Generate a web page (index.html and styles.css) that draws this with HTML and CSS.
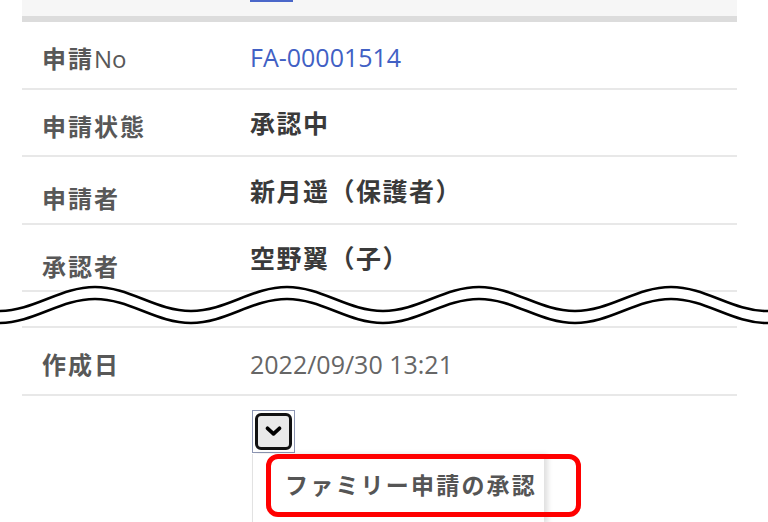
FILE: index.html
```html
<!DOCTYPE html>
<html lang="ja">
<head>
    <meta charset="UTF-8">
    <meta name="viewport" content="width=device-width, initial-scale=1.0">
    <title>ファミリー申請詳細</title>
    <link rel="stylesheet" href="styles.css">
</head>
<body>
    <div class="page">
        <div class="tabs">
            <span class="tab-line"></span>
        </div>

        <div class="detail">
            <div class="row">
                <div class="label">申請<span class="latin">No</span></div>
                <div class="value link">FA-00001514</div>
            </div>
            <div class="row">
                <div class="label">申請状態</div>
                <div class="value strong">承認中</div>
            </div>
            <div class="row">
                <div class="label low">申請者</div>
                <div class="value strong">新月遥（保護者）</div>
            </div>
            <div class="row">
                <div class="label low">承認者</div>
                <div class="value strong">空野翼（子）</div>
            </div>

            <!-- 省略部分 -->
            <div class="break">
                <svg class="wave" viewBox="0 0 768 50" width="768" height="50">
                    <path d="M-97,13 C-62,13 -36,37 -1,37 C34,37 60,13 95,13 C130,13 156,37 191,37 C226,37 252,13 287,13 C322,13 348,37 383,37 C418,37 444,13 479,13 C514,13 540,37 575,37 C610,37 636,13 671,13 C706,13 732,37 767,37 C802,37 828,13 863,13" fill="none" stroke="#fff" stroke-width="12"/>
                    <path d="M-97,7 C-62,7 -36,31 -1,31 C34,31 60,7 95,7 C130,7 156,31 191,31 C226,31 252,7 287,7 C322,7 348,31 383,31 C418,31 444,7 479,7 C514,7 540,31 575,31 C610,31 636,7 671,7 C706,7 732,31 767,31 C802,31 828,7 863,7" fill="none" stroke="#000" stroke-width="2.6"/>
                    <path d="M-97,19 C-62,19 -36,43 -1,43 C34,43 60,19 95,19 C130,19 156,43 191,43 C226,43 252,19 287,19 C322,19 348,43 383,43 C418,43 444,19 479,19 C514,19 540,43 575,43 C610,43 636,19 671,19 C706,19 732,43 767,43 C802,43 828,19 863,19" fill="none" stroke="#000" stroke-width="2.6"/>
                </svg>
            </div>

            <div class="row">
                <div class="label">作成日</div>
                <div class="value date">2022/09/30 13:21</div>
            </div>
        </div>

        <div class="actions">
            <div class="select-btn">
                <span class="select-inner">
                    <svg viewBox="0 0 18 12" width="17" height="11">
                        <path d="M2.5,2.5 L9,8.5 L15.5,2.5" fill="none" stroke="#000" stroke-width="4" stroke-linecap="round" stroke-linejoin="round"/>
                    </svg>
                </span>
            </div>
            <div class="menu">
                <div class="menu-item">ファミリー申請の承認</div>
                <div class="highlight"></div>
            </div>
        </div>
    </div>
</body>
</html>
```

FILE: styles.css
```css
html, body {
    margin: 0;
    height: 522px;
    overflow: hidden;
    background-color: #ffffff;
}
body {
    font-family: 'Open Sans', 'Noto Sans CJK JP', sans-serif;
    color: #333;
}
.page {
    width: 715px;
    margin-left: 22px;
}
.tabs {
    height: 16px;
    background-color: #f6f6f6;
    border-bottom: 6px solid #dcdcdc;
}
.tab-line {
    display: block;
    width: 43px;
    height: 2px;
    margin-left: 228px;
    background-color: #4a67c9;
}
.row {
    display: grid;
    grid-template-columns: 208px 1fr;
    align-items: center;
    box-sizing: border-box;
    height: 67.5px;
    padding-left: 20px;
    border-bottom: 2px solid #e8e8e8;
    font-size: 25px;
}
.label {
    color: #585858;
    font-size: 24px;
    font-weight: 700;
    letter-spacing: 2px;
    padding-top: 6px;
}
.label .latin {
    letter-spacing: 0;
    font-weight: 400;
}
.label.low {
    padding-top: 16px;
}
.value {
    letter-spacing: 1.5px;
}
.link {
    color: #4160c4;
    letter-spacing: 0;
    padding-top: 4px;
}
.strong {
    color: #3a3a3a;
    font-weight: 700;
}
.date {
    color: #666;
    letter-spacing: 0;
    padding-top: 6px;
}
.break {
    position: relative;
    height: 34px;
    border-bottom: 2px solid #e8e8e8;
}
.wave {
    position: absolute;
    left: -22px;
    top: -12px;
    display: block;
}
.actions {
    padding: 14px 0 0 230px;
}
.select-btn {
    box-sizing: content-box;
    width: 37px;
    height: 37px;
    padding: 2px;
    border: 1px solid #8d96b3;
}
.select-inner {
    display: flex;
    align-items: center;
    justify-content: center;
    box-sizing: border-box;
    width: 100%;
    height: 100%;
    border: 3px solid #111;
    border-radius: 6px;
    background-color: #e9e9e9;
}
.menu {
    position: relative;
    width: 291px;
    height: 70px;
    margin-top: 1px;
    background-color: #fff;
    border-left: 1px solid #e2e2e2;
    box-shadow: 4px 0 5px rgba(0, 0, 0, 0.12);
}
.menu-item {
    padding: 13px 0 0 32px;
    font-size: 23px;
    font-weight: 700;
    letter-spacing: 2.2px;
    color: #555;
}
.highlight {
    position: absolute;
    left: 13px;
    top: 0;
    width: 315px;
    height: 63px;
    box-sizing: border-box;
    border: 5px solid #ff0000;
    border-radius: 12px;
}
```
